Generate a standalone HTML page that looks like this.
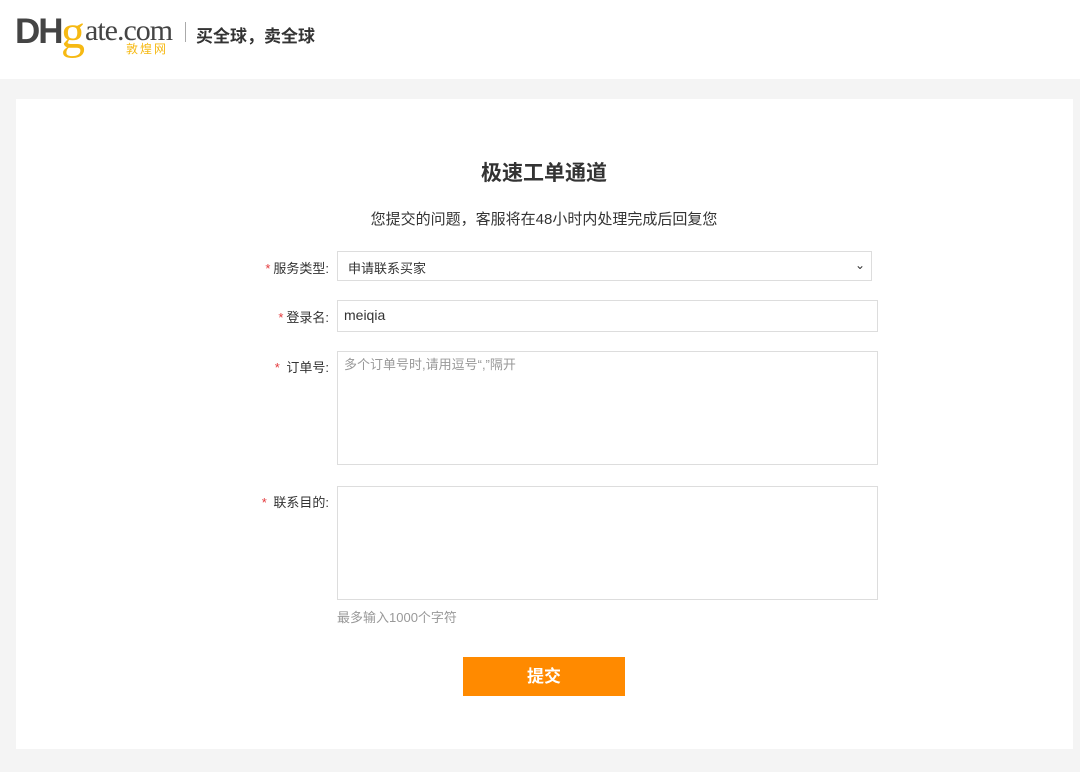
<!DOCTYPE html>
<html><head><meta charset="utf-8"><style>
body{margin:0;width:1080px;height:772px;background:#f4f4f4;font-family:"Liberation Sans","Noto Sans CJK SC",sans-serif;position:relative;overflow:hidden}
.hdr{position:absolute;left:0;top:0;width:1080px;height:79px;background:#fff}
.card{position:absolute;left:16px;top:99px;width:1057px;height:650px;background:#fff}
.a{position:absolute}
.lbl{position:absolute;font-size:13px;color:#333;text-align:right;width:100px}
.lbl b{color:#e4393c;font-weight:normal;margin-right:3px}
.box{position:absolute;border:1px solid #ddd;background:#fff;box-sizing:border-box;font-size:14px;color:#333}
</style></head><body>
<div class="hdr">
<div class="a" style="left:15px;top:12px;font-size:35px;font-weight:bold;color:#444;letter-spacing:-2px;font-family:'Liberation Sans',sans-serif">DH</div>
<div class="a" style="left:61px;top:5px;font-size:48px;color:#f6b913;font-family:'Liberation Serif',serif">g</div>
<div class="a" style="left:85px;top:14px;font-size:30px;color:#444;font-family:'Liberation Serif',serif;letter-spacing:-1px">ate.com</div>
<div class="a" style="left:126px;top:40px;font-size:12px;color:#f6b913;letter-spacing:2px">敦煌网</div>
<div class="a" style="left:185px;top:22px;width:1px;height:20px;background:#aaa"></div>
<div class="a" style="left:196px;top:22px;font-size:17px;font-weight:bold;color:#333">买全球，卖全球</div>
</div>
<div class="card"></div>
<div class="a" style="left:0;width:1088px;top:157px;text-align:center;font-size:21px;font-weight:bold;color:#333">极速工单通道</div>
<div class="a" style="left:0;width:1088px;top:208px;text-align:center;font-size:15px;color:#333">您提交的问题，客服将在48小时内处理完成后回复您</div>
<div class="lbl" style="left:229px;top:258px"><b>*</b>服务类型:</div>
<div class="box" style="left:337px;top:251px;width:535px;height:30px;padding:6px 10px;font-size:13px">申请联系买家<span style="position:absolute;right:6px;top:6px;font-size:12px">&#8964;</span></div>
<div class="lbl" style="left:229px;top:307px"><b>*</b>登录名:</div>
<div class="box" style="left:337px;top:300px;width:541px;height:32px;padding:6px 6px;">meiqia</div>
<div class="lbl" style="left:229px;top:357px"><b>*</b> 订单号:</div>
<div class="box" style="left:337px;top:351px;width:541px;height:114px;padding:2px 6px;font-size:13px;color:#999">多个订单号时,请用逗号“,”隔开</div>
<div class="lbl" style="left:229px;top:492px"><b>*</b> 联系目的:</div>
<div class="box" style="left:337px;top:486px;width:541px;height:114px"></div>
<div class="a" style="left:337px;top:607px;font-size:13px;color:#999">最多输入1000个字符</div>
<div class="a" style="left:463px;top:657px;width:162px;height:39px;background:#ff8a00;color:#fff;font-size:17px;font-weight:bold;text-align:center;line-height:39px">提交</div>
</body></html>
